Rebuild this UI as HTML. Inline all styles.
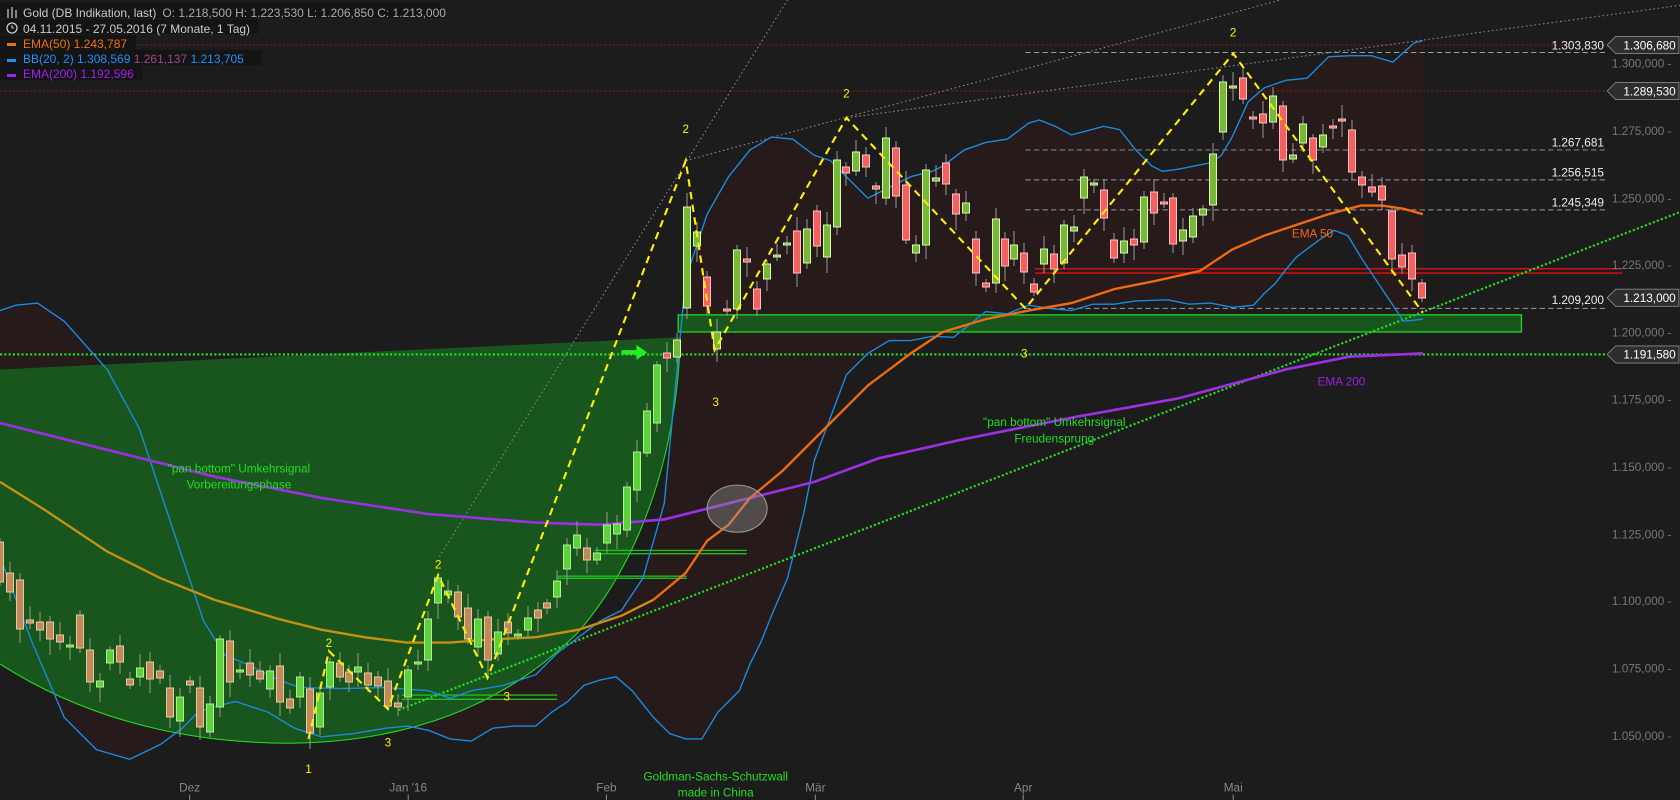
<!DOCTYPE html>
<html><head><meta charset="utf-8"><style>
html,body{margin:0;padding:0;background:#1c1c1c;overflow:hidden}
svg{display:block}
text{font-family:"Liberation Sans",sans-serif}
</style></head><body>
<svg id="s" width="1680" height="800" viewBox="0 0 1680 800" xmlns="http://www.w3.org/2000/svg">
<rect width="1680" height="800" fill="#1c1c1c"/>
<g transform="scale(1.07143,1.0709)">
<!-- BB fill -->
<polygon fill="#261a1b" points="0,290 15,285 35,283 60,300 100,345 130,400 150,460 170,520 190,580 210,612 230,620 260,635 280,642 320,643 360,642 400,645 420,652 440,645 470,640 500,630 520,610 540,595 560,580 580,570 600,540 620,470 640,260 660,200 680,165 700,140 720,128 740,130 760,145 775,150 790,165 810,185 830,175 850,165 870,160 880,155 900,140 920,133 940,130 960,115 970,112 985,118 1000,126 1015,122 1030,118 1045,121 1060,140 1075,155 1085,160 1100,158 1115,155 1130,152 1140,145 1150,128 1165,95 1180,82 1200,75 1220,73 1240,53 1260,52 1280,52 1300,58 1320,40 1328,38 1328,298 1310,300 1290,270 1270,240 1258,220 1245,215 1230,225 1210,240 1200,252 1190,265 1180,274 1170,285 1150,287 1130,283 1110,284 1090,280 1060,281 1040,284 1020,284 1000,290 980,288 960,285 940,293 920,291 905,303 890,315 870,314 850,318 830,318 810,330 790,350 775,390 760,430 750,480 735,540 720,575 710,600 700,620 690,645 670,665 655,690 640,690 625,685 610,670 590,645 575,632 560,635 545,640 530,655 515,665 500,678 480,678 460,680 440,692 420,690 400,682 380,678 360,680 330,685 300,688 275,680 250,665 220,655 200,660 185,665 170,680 150,695 121,709 90,700 60,670 30,600 0,520"/>
<!-- green area -->
<path fill="#18561d" d="M0,345 L633,315 L635,315 C632,420 600,520 540,590 C470,660 380,693 270,694 C160,694 70,665 0,620 Z"/>
<path fill="none" stroke="#22dd22" stroke-width="1" d="M635,315 C632,420 600,520 540,590 C470,660 380,693 270,694 C160,694 70,665 0,620"/>
<!-- green band -->
<rect x="633" y="294" width="787" height="16" fill="#18561d" stroke="#22cc22" stroke-width="1.3"/>
<!-- small green lines -->
<g stroke="#22bb22" stroke-width="1.3">
<line x1="555" y1="514" x2="697" y2="514"/><line x1="555" y1="517" x2="697" y2="517"/>
<line x1="520" y1="538" x2="641" y2="538"/><line x1="520" y1="540" x2="641" y2="540"/>
<line x1="375" y1="649" x2="520" y2="649"/><line x1="375" y1="653" x2="520" y2="653"/>
</g>
<!-- red lines -->
<line x1="966" y1="251" x2="1514" y2="251" stroke="#e01010" stroke-width="1.3"/>
<line x1="966" y1="255" x2="1514" y2="255" stroke="#e01010" stroke-width="1.3"/>
<!-- dotted red -->
<line x1="0" y1="42" x2="1500" y2="42" stroke="#8a1c1c" stroke-dasharray="2 2"/>
<line x1="0" y1="85" x2="1500" y2="85" stroke="#8a1c1c" stroke-dasharray="2 2"/>
<!-- grey dashed -->
<g stroke="#9a9a9a" stroke-dasharray="5 3" stroke-width="0.9">
<line x1="957" y1="49" x2="1500" y2="49"/><line x1="957" y1="140" x2="1500" y2="140"/>
<line x1="957" y1="168" x2="1500" y2="168"/><line x1="957" y1="196" x2="1500" y2="196"/>
<line x1="957" y1="288" x2="1500" y2="288"/>
</g>
<!-- grey dotted trend -->
<g stroke="#888" stroke-dasharray="1.5 2.5" stroke-width="1">
<line x1="410" y1="520" x2="735" y2="0"/><line x1="640" y1="150" x2="1195" y2="0"/><line x1="790" y1="110" x2="1568" y2="5"/>
</g>
<!-- green dotted -->
<line x1="0" y1="331" x2="1500" y2="331" stroke="#22dd22" stroke-width="2" stroke-dasharray="2 2"/>
<line x1="372" y1="663" x2="1568" y2="198" stroke="#22dd22" stroke-width="2" stroke-dasharray="2 2"/>
<!-- BB lines -->
<polyline fill="none" stroke="#1a8ae0" stroke-width="1.3" points="0,290 15,285 35,283 60,300 100,345 130,400 150,460 170,520 190,580 210,612 230,620 260,635 280,642 320,643 360,642 400,645 420,652 440,645 470,640 500,630 520,610 540,595 560,580 580,570 600,540 620,470 640,260 660,200 680,165 700,140 720,128 740,130 760,145 775,150 790,165 810,185 830,175 850,165 870,160 880,155 900,140 920,133 940,130 960,115 970,112 985,118 1000,126 1015,122 1030,118 1045,121 1060,140 1075,155 1085,160 1100,158 1115,155 1130,152 1140,145 1150,128 1165,95 1180,82 1200,75 1220,73 1240,53 1260,52 1280,52 1300,58 1320,40 1328,38"/>
<polyline fill="none" stroke="#1a8ae0" stroke-width="1.3" points="0,520 30,600 60,670 90,700 121,709 150,695 170,680 185,665 200,660 220,655 250,665 275,680 300,688 330,685 360,680 380,678 400,682 420,690 440,692 460,680 480,678 500,678 515,665 530,655 545,640 560,635 575,632 590,645 610,670 625,685 640,690 655,690 670,665 690,645 700,620 710,600 720,575 735,540 750,480 760,430 775,390 790,350 810,330 830,318 850,318 870,314 890,315 905,303 920,291 940,293 960,285 980,288 1000,290 1020,284 1040,284 1060,281 1090,280 1110,284 1130,283 1150,287 1170,285 1180,274 1190,265 1200,252 1210,240 1230,225 1245,215 1258,220 1270,240 1290,270 1310,300 1328,298"/>
<!-- EMA200 -->
<polyline fill="none" stroke="#9a30e0" stroke-width="2.5" points="0,395 100,420 200,445 300,465 400,480 500,488 560,490 620,485 660,475 700,465 760,450 820,428 900,410 1000,390 1100,372 1200,345 1260,333 1328,330"/>
<!-- EMA50 -->
<polyline fill="none" stroke="#c89010" stroke-width="2.2" points="0,450 40,475 100,515 150,540 200,560 260,578 300,588 340,595 380,600 420,600 460,597 500,595 540,588 580,575 610,560"/>
<polyline fill="none" stroke="#f06a10" stroke-width="2.2" points="610,560 640,535 660,505 680,490 700,465 730,440 770,400 810,360 850,330 880,310 920,298 960,290 1000,283 1040,270 1080,262 1120,253 1150,233 1180,220 1210,210 1240,200 1270,192 1290,192 1310,195 1328,200"/>
</g>
<g id="c"></g>
<g transform="scale(1.07143,1.0709)">
<polyline fill="none" stroke="#ffee00" stroke-width="2" stroke-dasharray="7 5" points="288,690 307,608 362,662 409,537 455,633 640,150 667,327 790,110 957,288 1151,50 1328,292"/>
<ellipse cx="688" cy="475" rx="28" ry="22" fill="rgba(150,150,150,0.4)" stroke="#999"/>
<path d="M580,327 h14 v-5 l10,7 l-10,7 v-5 h-14z" fill="#22ee22"/>
<g fill="#ffee00" font-size="11" text-anchor="middle">
<text x="307" y="604">2</text><text x="409" y="531">2</text><text x="640" y="124">2</text><text x="790" y="91">2</text><text x="1151" y="34">2</text>
<text x="362" y="697">3</text><text x="473" y="654">3</text><text x="668" y="379">3</text><text x="956" y="334">3</text><text x="288" y="722">1</text>
</g>
<g fill="#22dd22" font-size="11" text-anchor="middle">
<text x="223" y="441">"pan bottom" Umkehrsignal</text><text x="223" y="456">Vorbereitungsphase</text>
<text x="984" y="398">"pan bottom" Umkehrsignal</text><text x="984" y="413">Freudensprung</text>
<text x="668" y="729">Goldman-Sachs-Schutzwall</text><text x="668" y="744">made in China</text>
</g>
<text x="1225" y="222" fill="#f06a10" font-size="11" text-anchor="middle">EMA 50</text>
<text x="1252" y="360" fill="#9a20e0" font-size="11" text-anchor="middle">EMA 200</text>
<g fill="#eee" font-size="11" text-anchor="end">
<text x="1497" y="46">1.303,830</text><text x="1497" y="137">1.267,681</text><text x="1497" y="165">1.256,515</text><text x="1497" y="193">1.245,349</text><text x="1497" y="284">1.209,200</text>
</g>
<g fill="#777" font-size="11" text-anchor="end">
<text x="1560" y="63">1.300,000 -</text><text x="1560" y="126">1.275,000 -</text><text x="1560" y="189">1.250,000 -</text><text x="1560" y="251">1.225,000 -</text><text x="1560" y="314">1.200,000 -</text><text x="1560" y="377">1.175,000 -</text><text x="1560" y="440">1.150,000 -</text><text x="1560" y="503">1.125,000 -</text><text x="1560" y="565">1.100,000 -</text><text x="1560" y="628">1.075,000 -</text><text x="1560" y="691">1.050,000 -</text>
</g>
<g fill="#2e2e2e" stroke="#888" stroke-width="0.8">
<path d="M1500,42 l8,-8 h59 v16 h-59z"/><path d="M1500,85 l8,-8 h59 v16 h-59z"/><path d="M1500,278 l8,-8 h59 v16 h-59z"/><path d="M1500,331 l8,-8 h59 v16 h-59z"/>
</g>
<g fill="#fff" font-size="11" text-anchor="end">
<text x="1564" y="46">1.306,680</text><text x="1564" y="89">1.289,530</text><text x="1564" y="282">1.213,000</text><text x="1564" y="335">1.191,580</text>
</g>
<g fill="#888" font-size="11" text-anchor="middle">
<text x="177" y="739">Dez</text><text x="381" y="739">Jan '16</text><text x="566" y="739">Feb</text><text x="761" y="739">Mär</text><text x="955" y="739">Apr</text><text x="1151" y="739">Mai</text>
</g>
<g stroke="#888"><line x1="177" y1="742" x2="177" y2="747"/><line x1="381" y1="742" x2="381" y2="747"/><line x1="566" y1="742" x2="566" y2="747"/><line x1="761" y1="742" x2="761" y2="747"/><line x1="955" y1="742" x2="955" y2="747"/><line x1="1151" y1="742" x2="1151" y2="747"/></g>
</g>
<!-- legend (real coords) -->
<rect x="0" y="2" width="440" height="16" fill="#141414"/>
<rect x="0" y="19" width="258" height="15" fill="#141414"/>
<rect x="0" y="35" width="136" height="15" fill="#141414"/>
<rect x="0" y="50" width="262" height="15" fill="#141414"/>
<rect x="0" y="65" width="143" height="15" fill="#141414"/>
<g stroke="#ccc" stroke-width="1.2"><line x1="8" y1="9" x2="8" y2="18"/><line x1="12" y1="7" x2="12" y2="18"/><line x1="16" y1="10" x2="16" y2="18"/></g>
<circle cx="12" cy="28" r="5" fill="none" stroke="#ccc" stroke-width="1.3"/><path d="M12,25 v3 h2" stroke="#ccc" fill="none"/>
<text x="23" y="17" font-size="12" fill="#ccc">Gold (DB Indikation, last)<tspan fill="#aaa" dx="6">O: 1.218,500  H: 1.223,530  L: 1.206,850  C: 1.213,000</tspan></text>
<text x="23" y="33" font-size="12" fill="#ccc">04.11.2015 - 27.05.2016 (7 Monate, 1 Tag)</text>
<rect x="7" y="43" width="9" height="3" fill="#f07010"/>
<text x="23" y="48" font-size="12" fill="#f07010">EMA(50)  1.243,787</text>
<rect x="7" y="59" width="9" height="3" fill="#1e90ff"/>
<text x="23" y="63" font-size="12" fill="#1e90ff">BB(20, 2)  1.308,569 <tspan fill="#9a4a8a">1.261,137</tspan>  1.213,705</text>
<rect x="7" y="74" width="9" height="3" fill="#a020f0"/>
<text x="23" y="78" font-size="12" fill="#a020f0">EMA(200)  1.192,596</text>
</svg>
<script>
var d=[[0,542,582,0],[10,573,592,0],[20,580,629,0],[30,620,623,0],[40,622,630,0],[50,622,639,0],[60,635,642,0],[70,645,647,1],[80,615,648,0],[90,650,682,0],[100,681,687,1],[110,650,663,1],[120,646,662,0],[130,679,685,0],[140,668,677,1],[150,662,679,0],[160,671,678,0],[170,688,717,0],[180,697,721,1],[190,681,685,0],[200,688,727,0],[210,704,732,1],[220,639,707,1],[230,641,682,0],[240,670,672,1],[250,663,675,0],[260,671,679,0],[270,671,689,1],[280,666,702,0],[290,699,708,0],[300,677,697,1],[310,689,733,0],[320,693,727,1],[330,662,687,1],[340,663,677,0],[349,672,682,0],[358,667,672,1],[368,673,685,0],[378,677,686,0],[388,681,706,0],[398,703,707,0],[408,670,697,1],[418,662,664,1],[428,619,660,1],[438,578,603,1],[448,591,595,1],[458,592,617,0],[468,608,639,0],[478,619,647,1],[488,617,660,0],[498,632,654,1],[508,622,633,0],[518,634,636,1],[528,618,630,1],[538,610,618,0],[547,603,608,0],[557,581,597,1],[567,545,569,1],[577,535,548,1],[587,548,560,0],[597,553,560,1],[607,525,543,1],[617,524,534,1],[627,487,530,1],[637,452,490,1],[647,411,453,1],[657,365,423,1],[667,353,358,0],[677,340,357,1],[687,207,308,1],[697,232,246,1],[707,277,306,0],[717,332,349,1],[727,309,311,0],[737,250,309,1],[747,259,262,0],[757,289,309,0],[767,264,279,1],[777,255,257,1],[787,243,245,1],[797,231,273,0],[807,229,263,1],[817,211,246,0],[827,225,257,1],[837,160,227,1],[846,167,173,0],[856,152,171,1],[866,155,167,0],[876,186,189,0],[886,138,198,1],[896,148,196,0],[906,185,240,0],[916,245,253,1],[926,170,245,1],[936,178,181,1],[946,163,184,0],[956,194,214,0],[966,203,213,1],[976,239,273,0],[986,283,287,0],[996,219,283,1],[1005,239,266,0],[1014,245,259,1],[1024,253,272,0],[1034,284,292,0],[1044,249,264,1],[1054,254,269,0],[1064,225,263,1],[1074,227,231,1],[1084,177,198,1],[1094,183,185,1],[1104,190,218,0],[1114,240,258,0],[1124,241,253,1],[1134,239,245,0],[1144,197,242,1],[1154,192,213,0],[1164,202,204,0],[1173,198,244,0],[1183,230,241,1],[1193,216,237,1],[1203,209,215,1],[1213,154,205,1],[1223,82,132,1],[1233,86,88,1],[1243,78,99,0],[1253,117,119,0],[1263,114,123,0],[1273,96,122,1],[1283,106,160,0],[1293,155,159,1],[1303,124,143,1],[1313,138,160,0],[1323,135,147,1],[1333,126,128,0],[1342,119,121,0],[1352,130,172,0],[1362,177,185,0],[1372,187,192,0],[1382,186,200,0],[1392,211,259,0],[1402,255,267,0],[1412,253,279,0],[1422,283,298,0]];
var g=document.getElementById('c'),h='';
d.forEach(function(c,i){var x=c[0],t=c[1],b=c[2],u=c[3],L=c[0]<662;
var w1=4+(i*7%11),w2=4+(i*5%13);
var f,s,wk;
if(L){f=u?'#5cd13c':'#c08a5a';s=u?'#b0f090':'#e8c8a0';wk='#9a9a80';}else{f=u?'#78b838':'#f26060';s=u?'#d8f8b0':'#ffc0c0';wk='#999';}
h+='<line x1="'+x+'" y1="'+(t-w1)+'" x2="'+x+'" y2="'+(b+w2)+'" stroke="'+wk+'" stroke-width="1"/>';
var hh=Math.max(b-t,2);
h+='<rect x="'+(x-3.5)+'" y="'+t+'" width="7" height="'+hh+'" fill="'+f+'" stroke="'+s+'" stroke-width="1"/>';});
g.innerHTML=h;
</script>
</body></html>
